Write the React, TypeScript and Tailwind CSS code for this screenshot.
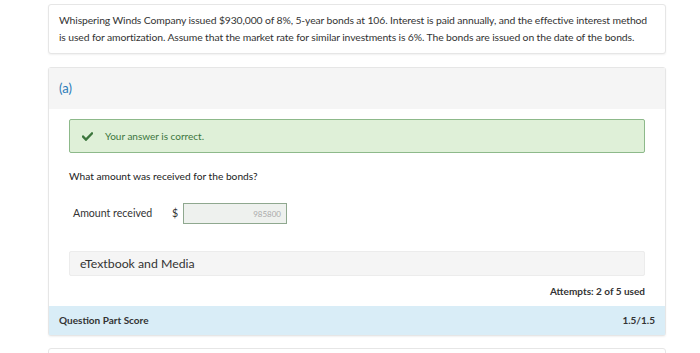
import React from "react";

const CheckIcon: React.FC = () => (
  <svg width="11" height="9" viewBox="0 0 12 10" className="shrink-0">
    <path d="M1 5.2 L4.3 8.5 L11 1.6" fill="none" stroke="#3c763d" strokeWidth="2.6" strokeLinecap="square" />
  </svg>
);

const App: React.FC = () => {
  return (
    <div
      className="h-[353px] w-[700px] overflow-hidden bg-white pl-[48px] pt-[4px] text-[#333]"
      style={{ fontFamily: "Lato, 'Open Sans', sans-serif" }}
    >
      {/* Question text */}
      <div className="w-[618px] whitespace-nowrap rounded-[3px] border border-[#e6e6e6] bg-white px-[10px] py-[7px] text-[10.4px] leading-[17px] tracking-[-0.12px] shadow-[0_1px_2px_rgba(0,0,0,0.06)]">
        Whispering Winds Company issued $930,000 of 8%, 5-year bonds at 106. Interest is paid annually, and the effective interest method
        <br />
        is used for amortization. Assume that the market rate for similar investments is 6%. The bonds are issued on the date of the bonds.
      </div>

      {/* Part (a) */}
      <div className="mt-[13px] w-[618px] rounded-[3px] border border-[#e6e6e6] bg-white shadow-[0_1px_2px_rgba(0,0,0,0.06)]">
        <div className="flex h-[41px] items-center bg-[#f5f5f5] px-[10px] text-[13px] text-[#2a7ab8]">(a)</div>

        <div className="px-[20px] pt-[10px]">
          <div className="flex h-[34px] items-center gap-[12px] rounded-[2px] border border-[#8db98a] bg-[#dff0d8] px-[12px] text-[10px] text-[#3c763d]">
            <CheckIcon />
            <span>Your answer is correct.</span>
          </div>

          <div className="mt-[16px] text-[10.2px] text-[#222]">What amount was received for the bonds?</div>

          <div className="mt-[19px] flex items-center pl-[4px] text-[10.6px]">
            <span className="w-[99px]">Amount received</span>
            <span className="w-[11px]">$</span>
            <div className="flex h-[21px] w-[104px] items-center justify-end border border-[#8fa88f] bg-[#eef1ee] px-[5px] text-[8px] text-[#aaa]">
              985800
            </div>
          </div>

          <div className="mt-[27px] flex h-[25px] items-center rounded-[2px] border border-[#ececec] bg-[#f5f5f5] px-[10px] text-[12.3px]">
            eTextbook and Media
          </div>

          <div className="flex h-[30px] items-center justify-end text-[10px] font-bold">Attempts: 2 of 5 used</div>
        </div>

        <div className="flex h-[29px] items-center justify-between bg-[#d9edf7] px-[10px] text-[10px] font-bold text-[#333]">
          <span>Question Part Score</span>
          <span>1.5/1.5</span>
        </div>
      </div>

      <div className="mt-[12px] h-[20px] w-[618px] rounded-[3px] border border-[#e6e6e6] bg-white" />
    </div>
  );
};

export default App;
